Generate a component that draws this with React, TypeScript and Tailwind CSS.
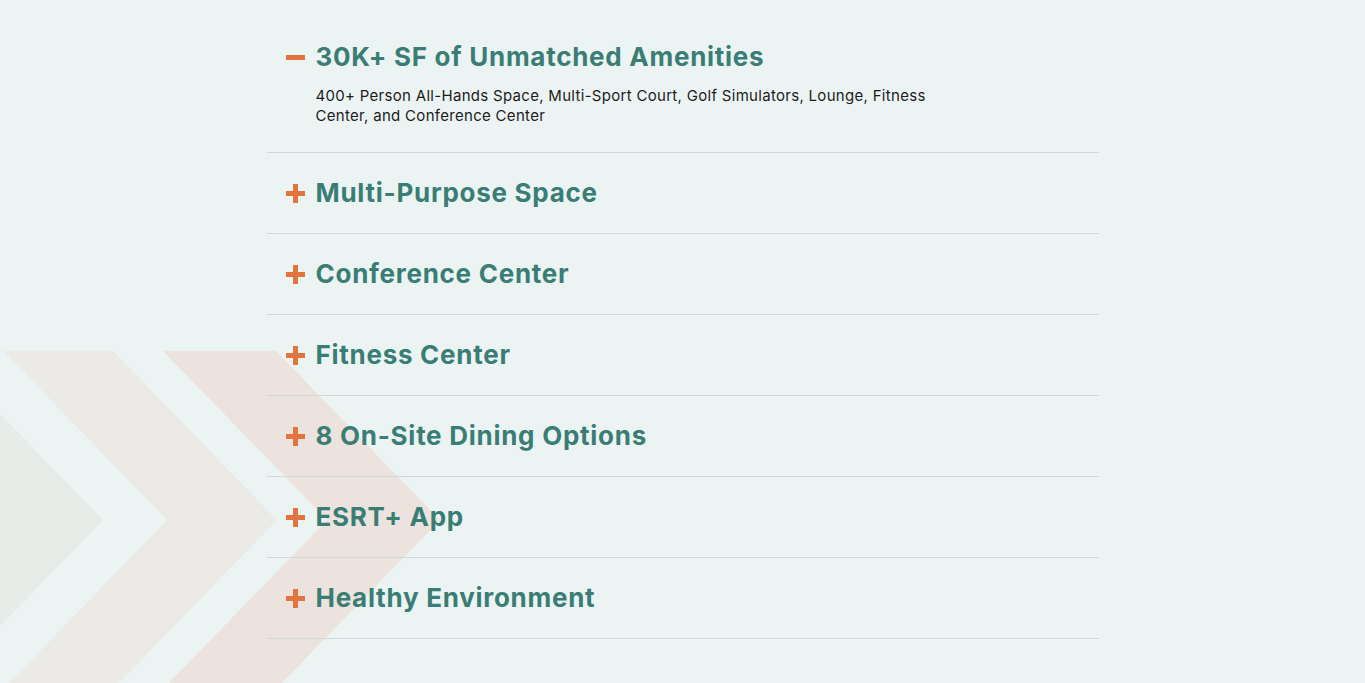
import React from 'react';

const items = [
  {
    title: '30K+ SF of Unmatched Amenities',
    body: '400+ Person All-Hands Space, Multi-Sport Court, Golf Simulators, Lounge, Fitness Center, and Conference Center',
    open: true,
  },
  { title: 'Multi-Purpose Space' },
  { title: 'Conference Center' },
  { title: 'Fitness Center' },
  { title: '8 On-Site Dining Options' },
  { title: 'ESRT+ App' },
  { title: 'Healthy Environment' },
];

function chevron(l: number, r: number) {
  return `${l},0 ${r},0 ${r + 164},169 ${r},338 ${l},338 ${l + 164},169`;
}

function Chevrons() {
  return (
    <svg
      aria-hidden="true"
      className="pointer-events-none absolute left-0 top-[351px] z-0"
      width="460"
      height="332"
      viewBox="0 0 460 332"
    >
      <polygon points={chevron(-300, -61)} fill="#e8ece8" />
      <polygon points={chevron(3, 113)} fill="#ebeae7" />
      <polygon points={chevron(163, 276)} fill="#ece3de" />
    </svg>
  );
}

function PlusIcon({ open }: { open?: boolean }) {
  return (
    <span className="relative mr-[11px] flex h-[30px] w-[19px] flex-shrink-0 items-center justify-center">
      <span className="absolute h-[5px] w-[19px] bg-[#e2753f]" />
      {!open && <span className="absolute h-[19px] w-[5px] bg-[#e2753f]" />}
    </span>
  );
}

export default function App() {
  return (
    <div
      className="relative h-[683px] overflow-hidden bg-[#ecf4f3]"
      style={{ fontFamily: 'Inter, "Noto Sans", sans-serif' }}
    >
      <Chevrons />

      <div className="relative z-10 mx-auto w-[832px] pt-[17px]">
        {items.map((item) => (
          <div
            key={item.title}
            className={`border-b border-[#d3d9d8] pl-[19px] pt-[25px] ${item.open ? 'pb-[26px]' : 'pb-[25px]'}`}
          >
            <div className="flex items-center">
              <PlusIcon open={item.open} />
              <h3 className="text-[26px] font-bold leading-[30px] tracking-[0.028em] text-[#3a7d75]">
                {item.title}
              </h3>
            </div>
            {item.open && (
              <p className="ml-[30px] mt-[14px] w-[660px] text-[15px] leading-[20px] tracking-[0.02em] text-[#1c1c1c]">
                {item.body}
              </p>
            )}
          </div>
        ))}
      </div>
    </div>
  );
}
